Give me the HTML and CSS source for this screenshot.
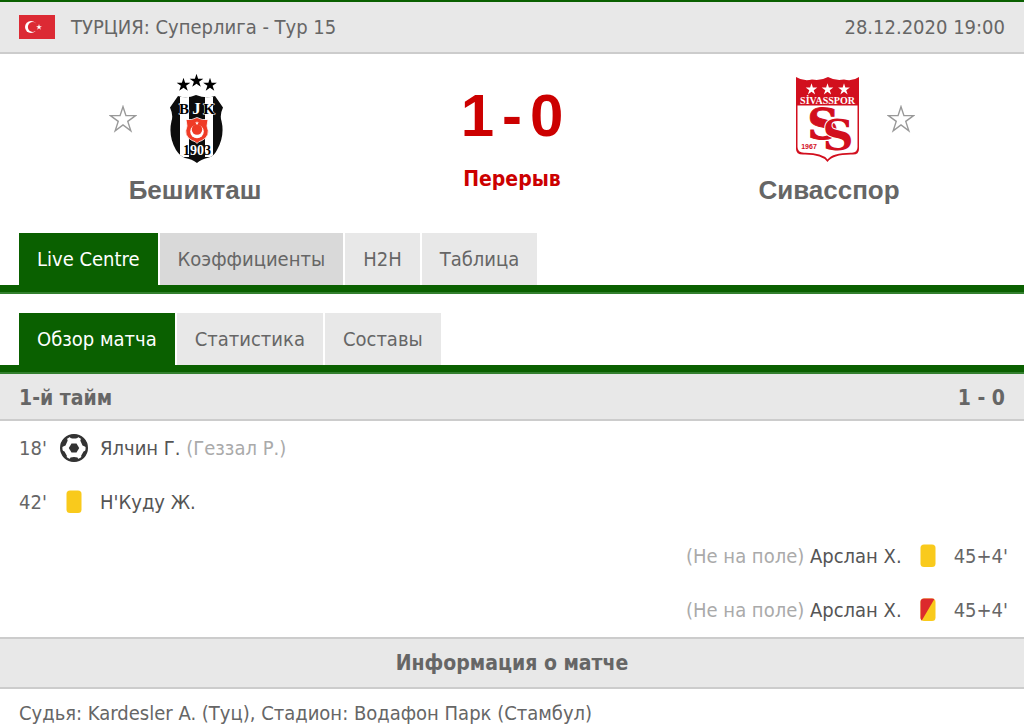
FILE: index.html
```html
<!DOCTYPE html>
<html lang="ru">
<head>
<meta charset="utf-8">
<meta name="viewport" content="width=device-width, initial-scale=1">
<title>Бешикташ - Сивасспор</title>
<link rel="stylesheet" href="styles.css">
</head>
<body>
<svg class="sprite" aria-hidden="true">
  <symbol id="star" viewBox="0 0 20 20"><path d="M10 .4l2.300 7.100h7.500l-6.100 4.400 2.400 7.200-6.100-4.400-6.100 4.400 2.400-7.200L.2 7.500h7.500z"/></symbol>
</svg>
<header class="topbar">
  <svg class="flag" viewBox="0 0 36 24" role="img" aria-label="Турция">
    <rect width="36" height="24" fill="#dc2a34"/>
    <circle cx="12" cy="12" r="6" fill="#fff"/>
    <circle cx="13.800" cy="12" r="4.900" fill="#dc2a34"/>
    <use href="#star" x="17" y="8.900" width="6" height="6" fill="#fff"/>
  </svg>
  <h1 class="league">ТУРЦИЯ: Суперлига - Тур 15</h1>
  <time class="date" datetime="2020-12-28T19:00">28.12.2020 19:00</time>
</header>

<section class="match">
  <div class="team team-home">
    <button class="fav" type="button" aria-label="В избранное: Бешикташ">
      <svg viewBox="0 0 20 20"><path d="M10 1.200l2.100 6.400h6.900l-5.600 4.100 2.200 6.700-5.600-4.200-5.600 4.200 2.200-6.700L1 7.600h6.900z"/></svg>
    </button>
    <svg class="crest" viewBox="-1 0 100 96" role="img" aria-label="Эмблема Бешикташ">
      <defs>
        <clipPath id="bjk"><path d="M32 25Q41 28 50 24Q60 28 69 25L77 36.500Q73.500 44 75.500 50Q79 65 71 79Q68 85 63 86.500Q55 88 51 92Q46 88 39 87Q34 85 30 79Q22 65 25.500 50Q27.500 44 24 36.500Z"/></clipPath>
      </defs>
      <use href="#star" x="30.500" y="6.500" width="14" height="14"/>
      <use href="#star" x="43.500" y="2.500" width="14" height="14"/>
      <use href="#star" x="57" y="6.500" width="14" height="14"/>
      <g clip-path="url(#bjk)">
        <rect x="20" y="20" width="60" height="76" fill="#0c0c0c"/>
        <rect x="34" y="26" width="9" height="60" fill="#fff"/>
        <rect x="59" y="26" width="8" height="60" fill="#fff"/>
      </g>
      <g class="serif">
        <text x="38" y="43" font-size="15" stroke="#fff" stroke-width="1" paint-order="stroke">B</text>
        <text x="50.500" y="43" font-size="17" fill="#fff">J</text>
        <text x="63" y="43" font-size="15" stroke="#fff" stroke-width="1" paint-order="stroke">K</text>
        <text x="51" y="84" font-size="14"><tspan>1</tspan><tspan fill="#fff">90</tspan><tspan>3</tspan></text>
      </g>
      <path d="M40 48.500Q46 49.500 51 46.500Q56 49.500 62 48.500L61 55Q65 65 56 69.500Q52 70.500 51 72.500Q50 70.500 46 69.500Q37 65 41 55Z" fill="#ef3b26" stroke="#fff" stroke-width=".8"/>
      <circle cx="51" cy="60.500" r="6.800" fill="#fff"/>
      <circle cx="51" cy="58.500" r="5.200" fill="#ef3b26"/>
      <use href="#star" x="49" y="50" width="4" height="4" fill="#fff"/>
    </svg>
    <h2 class="team-name">Бешикташ</h2>
  </div>

  <div class="result">
    <p class="score"><span>1</span><span>-</span><span>0</span></p>
    <p class="status">Перерыв</p>
  </div>

  <div class="team team-away">
    <svg class="crest" viewBox="1 0 100 96" role="img" aria-label="Эмблема Сивасспор">
      <path d="M18 6Q26 11 34 8.500Q43 10 50 6Q57 10 66 8.500Q74 11 81 6V78Q81 83.500 75 83.500Q55 83 49.500 91Q44 83 25 83.500Q18 83.500 18 78Z" fill="#d20f1e"/>
      <path d="M19.500 34.500H79.500V76Q79.500 81.500 74 81.800Q55 81.500 49.500 88.500Q44 81.500 26 81.800Q19.500 81.500 19.500 76Z" fill="#fff"/>
      <g fill="#fff">
        <use href="#star" x="27.500" y="12" width="12" height="12"/>
        <use href="#star" x="43.500" y="12" width="12" height="12"/>
        <use href="#star" x="60" y="12" width="12" height="12"/>
      </g>
      <g class="serif">
        <text x="49.500" y="32.500" font-size="10" fill="#fff">SİVASSPOR</text>
        <g class="slab" fill="#d20f1e" stroke="#d20f1e" stroke-width="1">
          <text x="45" y="68" font-size="43">S</text>
          <text x="60" y="79" font-size="43" stroke="#fff" stroke-width="2" paint-order="stroke">S</text>
        </g>
        <text class="sans" x="31" y="78" font-size="7" fill="#d20f1e">1967</text>
      </g>
    </svg>
    <button class="fav" type="button" aria-label="В избранное: Сивасспор">
      <svg viewBox="0 0 20 20"><path d="M10 1.200l2.100 6.400h6.900l-5.600 4.100 2.200 6.700-5.600-4.200-5.600 4.200 2.200-6.700L1 7.600h6.900z"/></svg>
    </button>
    <h2 class="team-name">Сивасспор</h2>
  </div>
</section>

<nav class="tabs" aria-label="Матч">
  <a class="tab active" href="#live">Live Centre</a>
  <a class="tab hover" href="#odds">Коэффициенты</a>
  <a class="tab" href="#h2h">H2H</a>
  <a class="tab" href="#table">Таблица</a>
</nav>
<nav class="tabs" aria-label="Live Centre">
  <a class="tab active" href="#summary">Обзор матча</a>
  <a class="tab" href="#stats">Статистика</a>
  <a class="tab" href="#lineups">Составы</a>
</nav>

<main>
  <h3 class="period"><span>1-й тайм</span><span>1 - 0</span></h3>
  <ul class="events">
    <li class="event">
      <span class="minute">18'</span>
      <svg class="icon" viewBox="0 0 30 30" role="img" aria-label="Гол">
        <circle cx="15" cy="15" r="12.800" fill="#fff" stroke="#333" stroke-width="2.400"/>
        <g fill="#333">
          <path d="M12.500 10.500h5l2.700 4.500-2.700 4.500h-5L9.800 15z"/>
          <path d="M10 2.500Q15 .5 20 2.500L18.500 5Q15 6 11.500 5zM10 27.500Q15 29.500 20 27.500L18.500 24.500Q15 23.500 11.500 24.500zM5 6L8 6Q9 7 8.500 8L6.500 12.500 2 14.500Q1.500 10 5 6zM25 6L22 6Q21 7 21.500 8L23.500 12.500 28 14.500Q28.500 10 25 6zM2.500 17L5.500 18.500 8 23 6.500 25.500Q3 22 2.500 17zM27.500 17L24.500 18.500 22 23 23.500 25.500Q27 22 27.500 17z"/>
        </g>
      </svg>
      <span class="player">Ялчин Г. <span class="note">(Геззал Р.)</span></span>
    </li>
    <li class="event">
      <span class="minute">42'</span>
      <svg class="icon" viewBox="0 0 30 30" role="img" aria-label="Жёлтая карточка"><rect x="7.500" y="3.500" width="15" height="22.500" rx="3.500" fill="#f9ca1c"/></svg>
      <span class="player">Н'Куду Ж.</span>
    </li>
    <li class="event away">
      <span class="minute">45+4'</span>
      <svg class="icon" viewBox="0 0 30 30" role="img" aria-label="Жёлтая карточка"><rect x="7.500" y="3.500" width="15" height="22.500" rx="3.500" fill="#f9ca1c"/></svg>
      <span class="player"><span class="note">(Не на поле)</span> Арслан Х.</span>
    </li>
    <li class="event away">
      <span class="minute">45+4'</span>
      <svg class="icon" viewBox="0 0 30 30" role="img" aria-label="Вторая жёлтая карточка">
        <clipPath id="card"><rect x="7.500" y="3.500" width="15" height="22.500" rx="3.500"/></clipPath>
        <g clip-path="url(#card)"><rect width="30" height="30" fill="#f9ca1c"/><path d="M7 3H22L8.500 26H7z" fill="#dc2a2c"/></g>
      </svg>
      <span class="player"><span class="note">(Не на поле)</span> Арслан Х.</span>
    </li>
  </ul>
  <h3 class="info-title">Информация о матче</h3>
  <p class="info">Судья: Kardesler A. (Туц), Стадион: Водафон Парк (Стамбул)</p>
</main>
</body>
</html>
```

FILE: styles.css
```css
* { box-sizing: border-box; }
body, h1, h2, h3, p, ul { margin: 0; padding: 0; }
body {
  background: #fff;
  color: #666;
  font: 20px/26px "DejaVu Sans Condensed", "DejaVu Sans", sans-serif;
  overflow-x: hidden;
}
svg { display: block; }
.sprite { position: absolute; width: 0; height: 0; }

.topbar {
  display: flex;
  align-items: center;
  gap: 16px;
  padding: 12px 19px;
  border-top: 2px solid #0a6000;
  border-bottom: 2px solid #ccc;
  background: #e8e8e8;
}
.flag { width: 36px; height: 24px; }
.league { flex: 1; font-size: 20px; font-weight: normal; }

.match {
  display: grid;
  grid-template-columns: 390fr 244fr 390fr;
  padding: 17px 0 28px;
}
.team {
  display: grid;
  grid-template-columns: 1fr 100px 1fr;
  column-gap: 8px;
  row-gap: 9px;
  align-items: center;
}
.crest { grid-column: 2; width: 100px; height: 96px; }
.fav {
  width: 28px;
  height: 28px;
  padding: 0;
  border: 0;
  background: none;
  cursor: pointer;
}
.team-home .fav { justify-self: end; }
.fav svg { width: 28px; height: 28px; fill: #fff; stroke: #999; stroke-width: 1; }
.team-name {
  grid-column: 1 / -1;
  text-align: center;
  font: bold 26px/29px "Liberation Sans", Arial, sans-serif;
}
.serif { font-family: "Liberation Serif", serif; font-weight: bold; text-anchor: middle; }
.slab { font-family: "DejaVu Serif", serif; }
.sans { font-family: "Liberation Sans", sans-serif; }

.result { color: #c00; font-weight: bold; text-align: center; }
.score {
  display: flex;
  justify-content: center;
  gap: 8px;
  padding-top: 15px;
  font: bold 60px/60px "Liberation Sans", Arial, sans-serif;
}
.status { padding-top: 20px; font-size: 21px; }

.tabs {
  display: flex;
  gap: 2px;
  margin-bottom: 19px;
  padding: 0 19px 7px;
  border-bottom: 2px solid #33802f;
  background: linear-gradient(#0a6000, #0a6000) bottom / 100% 7px no-repeat;
}
.tabs + .tabs { margin-bottom: 0; }
.tab {
  padding: 13px 18px;
  background: #e8e8e8;
  color: #666;
  text-decoration: none;
}
.tab.hover { background: #d9d9d9; }
.tab.active { background: #0a6000; color: #fff; }

.period, .info-title {
  padding: 11px 19px 8px;
  border-bottom: 2px solid #ccc;
  background: #e8e8e8;
  font-size: 21px;
}
.period { display: flex; justify-content: space-between; }
.info-title { padding: 11px 19px; border-top: 2px solid #ccc; text-align: center; }

.events { list-style: none; }
.event {
  display: flex;
  align-items: center;
  padding: 12px 16px 12px 19px;
}
.event.away { flex-direction: row-reverse; }
.minute { width: 40px; }
.away .minute { width: auto; }
.icon { width: 30px; height: 30px; }
.player { margin-left: 11px; color: #555; }
.away .icon { margin: 0 11px; }
.away .player { margin: 0; }
.note { color: #aaa; }
.info { padding: 11px 19px 0; }
```
